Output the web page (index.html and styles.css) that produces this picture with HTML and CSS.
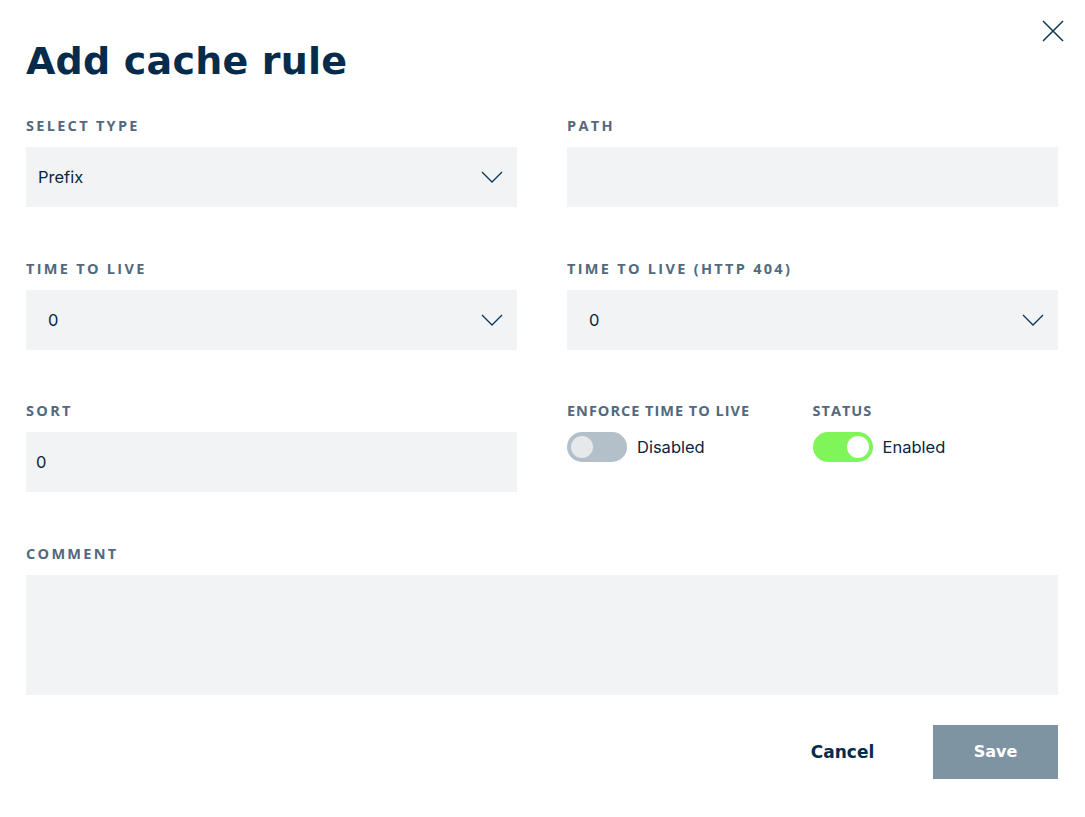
FILE: index.html
```html
<!DOCTYPE html>
<html lang="en">
<head>
<meta charset="utf-8">
<title>Add cache rule</title>
<link rel="stylesheet" href="styles.css">
</head>
<body>
<div class="dialog">
  <button class="close" aria-label="Close">
    <svg width="22" height="22" viewBox="0 0 22 22"><path d="M1 1L21 21M21 1L1 21" stroke="#0b3556" stroke-width="1.5" fill="none"/></svg>
  </button>
  <h1 class="title">Add cache rule</h1>

  <div class="grid">
    <div class="field">
      <div class="label">SELECT TYPE</div>
      <div class="box select pad-sm">
        <span class="value">Prefix</span>
        <svg class="chev" width="22" height="12" viewBox="0 0 22 12"><path d="M1 1L11 11L21 1" stroke="#0b3556" stroke-width="1.3" fill="none"/></svg>
      </div>
    </div>
    <div class="field">
      <div class="label">PATH</div>
      <div class="box"></div>
    </div>

    <div class="field">
      <div class="label">TIME TO LIVE</div>
      <div class="box select pad-lg">
        <span class="value">0</span>
        <svg class="chev" width="22" height="12" viewBox="0 0 22 12"><path d="M1 1L11 11L21 1" stroke="#0b3556" stroke-width="1.3" fill="none"/></svg>
      </div>
    </div>
    <div class="field">
      <div class="label">TIME TO LIVE (HTTP 404)</div>
      <div class="box select pad-lg">
        <span class="value">0</span>
        <svg class="chev" width="22" height="12" viewBox="0 0 22 12"><path d="M1 1L11 11L21 1" stroke="#0b3556" stroke-width="1.3" fill="none"/></svg>
      </div>
    </div>

    <div class="field">
      <div class="label">SORT</div>
      <div class="box pad-xs"><span class="value">0</span></div>
    </div>
    <div class="switches">
      <div class="switch-field">
        <div class="label tight">ENFORCE TIME TO LIVE</div>
        <div class="switch-row">
          <span class="toggle off"><span class="knob"></span></span>
          <span class="switch-text">Disabled</span>
        </div>
      </div>
      <div class="switch-field">
        <div class="label tight">STATUS</div>
        <div class="switch-row">
          <span class="toggle on"><span class="knob"></span></span>
          <span class="switch-text">Enabled</span>
        </div>
      </div>
    </div>

    <div class="field wide">
      <div class="label">COMMENT</div>
      <div class="box textarea"></div>
    </div>
  </div>

  <div class="actions">
    <button class="btn-cancel">Cancel</button>
    <button class="btn-save">Save</button>
  </div>
</div>
</body>
</html>
```

FILE: styles.css
```css
* { box-sizing: border-box; }

body {
  margin: 0;
  background: #ffffff;
  font-family: "Inter", "Noto Sans", sans-serif;
  color: #0a2540;
}

.dialog {
  position: relative;
  width: 1085px;
  padding: 36px 27px 0 26px;
}

.close {
  position: absolute;
  top: 20px;
  right: 21px;
  border: 0;
  background: none;
  padding: 0;
  width: 22px;
  height: 22px;
  cursor: pointer;
}

.title {
  margin: 0;
  font-family: "DejaVu Sans", sans-serif;
  font-weight: 700;
  font-size: 38px;
  line-height: 50px;
  letter-spacing: 0.2px;
  color: #062b4b;
}

.grid {
  display: grid;
  grid-template-columns: 491px 491px;
  column-gap: 50px;
  row-gap: 51.7px;
  margin-top: 30px;
}

.field { display: flex; flex-direction: column; }
.field.wide { grid-column: 1 / 3; }

.label {
  font-family: "Open Sans", sans-serif;
  font-weight: 700;
  font-size: 14.5px;
  line-height: 20px;
  letter-spacing: 2.3px;
  color: #53697d;
  margin-bottom: 11px;
}
.label.tight {
  letter-spacing: 1px;
}

.box {
  height: 60px;
  background: #f2f3f5;
  display: flex;
  align-items: center;
}
.box.textarea { height: 120px; }

.pad-sm { padding-left: 12px; }
.pad-lg { padding-left: 22px; }
.pad-xs { padding-left: 10px; }

.select { justify-content: space-between; padding-right: 14px; }

.value {
  font-size: 16.5px;
  color: #0a2540;
}

.chev { display: block; }

.switches {
  display: flex;
}
.switch-field { display: flex; flex-direction: column; width: 246px; }

.switch-row {
  display: flex;
  align-items: center;
  gap: 10px;
}

.toggle {
  width: 60px;
  height: 30px;
  border-radius: 15px;
  display: flex;
  align-items: center;
  padding: 0 4px;
}
.toggle .knob {
  width: 22px;
  height: 22px;
  border-radius: 50%;
}
.toggle.off { background: #b3bfc9; }
.toggle.off .knob { background: #e6e9ec; }
.toggle.on { background: #7ff55a; justify-content: flex-end; }
.toggle.on .knob { background: #ffffff; }

.switch-text { font-size: 16.5px; color: #0a2540; }

.actions {
  display: flex;
  justify-content: flex-end;
  align-items: center;
  gap: 28px;
  margin-top: 29.8px;
}

.btn-cancel {
  border: 0;
  background: none;
  font-family: "DejaVu Sans", sans-serif;
  font-weight: 700;
  font-size: 17px;
  color: #062b4b;
  width: 125px;
  height: 54px;
  padding: 0;
  cursor: pointer;
}

.btn-save {
  border: 0;
  background: #7f94a3;
  color: #ffffff;
  font-family: "DejaVu Sans", sans-serif;
  font-weight: 700;
  font-size: 16px;
  width: 125px;
  height: 54px;
  padding: 0;
  cursor: pointer;
}
```
